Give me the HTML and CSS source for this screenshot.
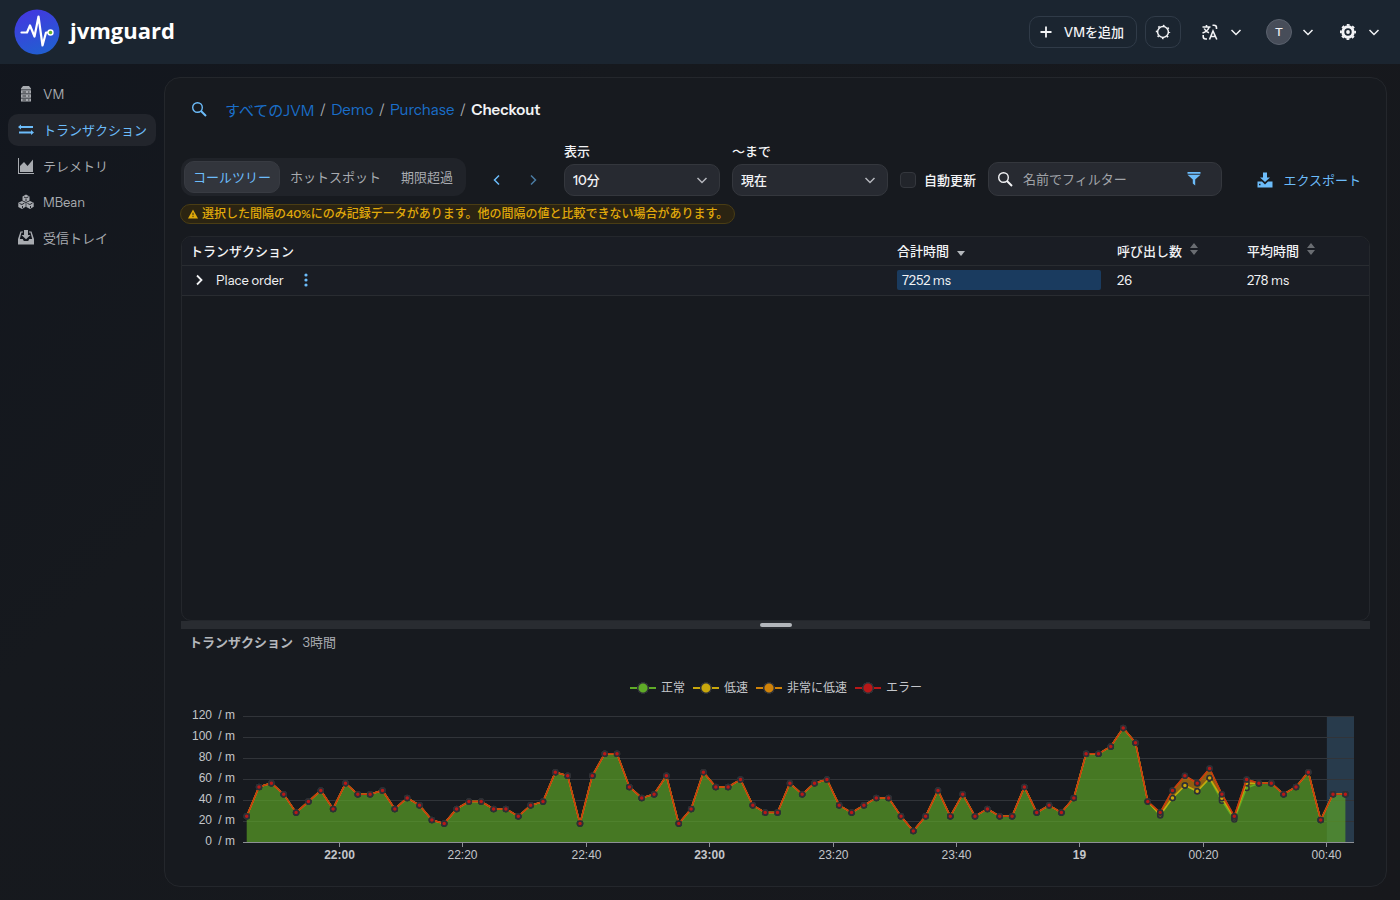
FILE: index.html
```html
<!DOCTYPE html>
<html lang="ja">
<head>
    <meta charset="UTF-8">
    <meta name="viewport" content="width=device-width, initial-scale=1.0">
    <title>jvmguard</title>
    <link rel="stylesheet" href="styles.css">
</head>
<body>
    <header class="navbar">
        <a class="brand" href="#">
            <svg class="logo" viewBox="0 0 46 46" aria-hidden="true">
                <defs>
                    <linearGradient id="logoFill" x1="0.3" y1="0" x2="0.7" y2="1">
                        <stop offset="0" stop-color="#4338e0"/>
                        <stop offset="1" stop-color="#2060d0"/>
                    </linearGradient>
                </defs>
                <circle cx="23" cy="23" r="22.5" fill="url(#logoFill)"/>
                <path d="M7.500 23.500h5.500l3-7 4.500 11 4-20 4 29 3.500-13h2" fill="none" stroke="#fff" stroke-width="2.200" stroke-linejoin="round" stroke-linecap="round"/>
                <circle cx="36.500" cy="23.500" r="2.500" fill="#62b52c" stroke="#fff" stroke-width="1.400"/>
            </svg>
            <span>jvmguard</span>
        </a>
        <div class="navbar-right">
            <button class="btn-outline add-vm">
                <svg class="icon" viewBox="0 0 16 16"><path d="M8 2.500v11M2.500 8h11" stroke="currentColor" stroke-width="1.800"/></svg>
                VMを追加
            </button>
            <button class="btn-outline square" aria-label="テーマ">
                <svg class="icon" viewBox="0 0 16 16" fill="none" stroke="currentColor">
                    <circle cx="8" cy="8" r="5.400" stroke-width="1.500"/>
                    <circle cx="8" cy="8" r="6.500" stroke-width="1.400" stroke-dasharray="1.700 3.405" stroke-dashoffset="0.850"/>
                </svg>
            </button>
            <button class="menu-button lang" aria-label="言語">
                <svg class="icon" viewBox="0 0 16 16" fill="none" stroke="currentColor" stroke-width="1.600">
                    <path d="M0.500 3h8M4.500 1v2M7 3.500c-1 2.500-3.500 4.500-6.500 5.500M2.200 4.500c1 2 2.800 3.500 4.800 4.300M7.500 15.500l3.500-8.500 3.800 8.500M8.800 12.500h4.800M10.500 1.200H12a2.500 2.500 0 0 1 2.500 2.500V5M1.200 11v1.500a2.500 2.500 0 0 0 2.500 2.500H5"/>
                </svg>
                <svg class="chevron" viewBox="0 0 12 12"><path d="M1.500 4l4.500 4.500 4.500-4.500"/></svg>
            </button>
            <button class="menu-button user" aria-label="ユーザー">
                <span class="avatar">T</span>
                <svg class="chevron" viewBox="0 0 12 12"><path d="M1.500 4l4.500 4.500 4.500-4.500"/></svg>
            </button>
            <button class="menu-button settings" aria-label="設定">
                <svg class="icon" viewBox="0 0 16 16" fill="none" stroke="currentColor">
                    <circle cx="8" cy="8" r="5.200" stroke-width="3"/>
                    <circle cx="8" cy="8" r="7.100" stroke-width="1.800" stroke-dasharray="2.800 2.776" stroke-dashoffset="1.400"/>
                    <circle cx="8" cy="8" r="1.900" fill="currentColor" stroke="none"/>
                </svg>
                <svg class="chevron" viewBox="0 0 12 12"><path d="M1.500 4l4.500 4.500 4.500-4.500"/></svg>
            </button>
        </div>
    </header>
    <div class="container">
        <nav class="sidebar">
            <a href="#">
                <svg class="icon" viewBox="0 0 16 16" fill="currentColor"><path d="M5 0h6l2 2.500v1H3v-1zM3 4.200h10v3.400H3zM3 8.300h10v3.400H3zM3 12.400h10V15.500H3z"/><path d="M4.500 6h3.500M10 6h1.500M4.500 10h3.500M10 10h1.500M4.500 14h3.500M10 14h1.500" stroke="#16191f" stroke-width="0.800"/></svg>
                VM
            </a>
            <a href="#" class="active">
                <svg class="icon" viewBox="0 0 16 16" fill="currentColor"><path d="M0 5l3-2.500V4h12v2H3v1.500zM16 10.500L13 8v1.500H1v2h12V13z"/></svg>
                トランザクション
            </a>
            <a href="#">
                <svg class="icon" viewBox="0 0 16 16" fill="currentColor"><path d="M0 0h1v15h15v1H0zM2 14V8l4-4 3.500 4L15 1.500V14z"/></svg>
                テレメトリ
            </a>
            <a href="#">
                <svg class="icon" viewBox="0 0 16 16" fill="currentColor"><path d="M8 0.500l3.500 2v4L8 8 4.500 6.500v-4zM4 7l3.700 1.800v4L4 15 0.300 13V8.800zM12 7l3.700 1.800v4L12 15l-3.700-2V8.800z"/><path d="M6 3l2 1 2.500-1.200M8 5v2M1.500 9.500L4 10.500l2.500-1.500M9.500 9.500l2.500 1 2.500-1.500M4.500 12v2M12.500 12v2" fill="none" stroke="#16191f" stroke-width="0.900"/></svg>
                MBean
            </a>
            <a href="#">
                <svg class="icon" viewBox="0 0 16 16" fill="currentColor"><path d="M6 0h4v5h2.500L8 9.200 3.500 5H6zM2.500 1.500H5v1H3.500L1.800 9h3l1 2h4.400l1-2h3l-1.700-6.500H11v-1h2.500L16 9v5.500H0V9z"/></svg>
                受信トレイ
            </a>
        </nav>
        <main class="panel">
            <div class="breadcrumb">
                <button class="search-button" aria-label="検索">
                    <svg class="icon" viewBox="0 0 16 16" fill="none" stroke="currentColor"><circle cx="6.500" cy="6.500" r="4.800" stroke-width="1.400"/><path d="M10 10l5 5" stroke-width="2"/></svg>
                </button>
                <a href="#">すべてのJVM</a><span>/</span><a href="#">Demo</a><span>/</span><a href="#">Purchase</a><span>/</span><strong>Checkout</strong>
            </div>

            <div class="toolbar">
                <div class="tabs">
                    <button class="active">コールツリー</button>
                    <button>ホットスポット</button>
                    <button>期限超過</button>
                </div>
                <div class="pager">
                    <button aria-label="前へ"><svg viewBox="0 0 12 12"><path d="M8 1.500L3.500 6 8 10.500"/></svg></button>
                    <button aria-label="次へ" disabled><svg viewBox="0 0 12 12"><path d="M4 1.500L8.500 6 4 10.500"/></svg></button>
                </div>
                <div class="field">
                    <label for="interval">表示</label>
                    <select id="interval"><option>10分</option></select>
                </div>
                <div class="field">
                    <label for="until">～まで</label>
                    <select id="until"><option>現在</option></select>
                </div>
                <label class="auto-update"><input type="checkbox">自動更新</label>
                <div class="filter">
                    <svg class="icon" viewBox="0 0 16 16" fill="none" stroke="currentColor"><circle cx="6.500" cy="6.500" r="4.800" stroke-width="1.400"/><path d="M10 10l5 5" stroke-width="2"/></svg>
                    <input type="text" placeholder="名前でフィルター" aria-label="名前でフィルター">
                    <button aria-label="フィルター"><svg class="icon" viewBox="0 0 16 16" fill="currentColor"><path d="M1.500 1h13v1.800h-13zM1.500 3.800h13L9.200 8.500v6L6.800 12.500v-4z"/></svg></button>
                </div>
                <button class="export">
                    <svg class="icon" viewBox="0 0 16 16" fill="currentColor"><path d="M6 0.500h4v5h3L8 10 3 5.500h3zM0.500 9.500H5l3 3 3-3h4.500v6H0.500z"/><path d="M2 12.500h1.500" stroke="#171a1f" stroke-width="1.500"/></svg>
                    エクスポート
                </button>
            </div>

            <div class="notice">
                <svg viewBox="0 0 12 12"><path d="M6 0.500L12 11.500H0z" fill="currentColor"/><path d="M6 4.500v3M6 8.500v1.200" stroke="#2b2412" stroke-width="1.200"/></svg>
                選択した間隔の40%にのみ記録データがあります。他の間隔の値と比較できない場合があります。
            </div>

            <div class="table-box">
                <table>
                    <colgroup><col><col class="col-total"><col class="col-count"><col class="col-avg"></colgroup>
                    <thead>
                        <tr>
                            <th>トランザクション</th>
                            <th>合計時間<svg class="sort sorted" viewBox="0 0 8 14"><path d="M0 5h8l-4 5z"/></svg></th>
                            <th>呼び出し数<svg class="sort" viewBox="0 0 8 14"><path d="M0 6h8L4 1zM0 8h8l-4 5z"/></svg></th>
                            <th>平均時間<svg class="sort" viewBox="0 0 8 14"><path d="M0 6h8L4 1zM0 8h8l-4 5z"/></svg></th>
                        </tr>
                    </thead>
                    <tbody>
                        <tr>
                            <td>
                                <div class="tree-cell">
                                    <button class="expand" aria-label="展開"><svg viewBox="0 0 12 12"><path d="M4 1.500L8.500 6 4 10.500"/></svg></button>
                                    Place order
                                    <button class="more" aria-label="メニュー"><svg viewBox="0 0 4 14" fill="currentColor"><circle cx="2" cy="2" r="1.600"/><circle cx="2" cy="7" r="1.600"/><circle cx="2" cy="12" r="1.600"/></svg></button>
                                </div>
                            </td>
                            <td><div class="time-bar">7252 ms</div></td>
                            <td>26</td>
                            <td>278 ms</td>
                        </tr>
                    </tbody>
                </table>
            </div>
            <div class="splitter"><span></span></div>

            <section class="chart-section">
                <h2>トランザクション <span>3時間</span></h2>
                <ul class="legend">
                    <li class="normal"><i></i>正常</li>
                    <li class="slow"><i></i>低速</li>
                    <li class="very-slow"><i></i>非常に低速</li>
                    <li class="error"><i></i>エラー</li>
                </ul>
                <svg id="chart" class="chart"></svg>
            </section>
        </main>
    </div>

    <script>
        // one count = 3.5 transactions per minute, one sample every two minutes
        const UNIT = 3.5;
        const total = [
            7, 15, 16, 13, 8, 11, 14, 9, 16, 13, 13, 14, 9, 12, 10, 6, 5, 9, 11, 11,
            9, 9, 7, 10, 11, 19, 18, 5, 18, 24, 24, 15, 12, 13, 18, 5, 9, 19, 15, 15,
            17, 10, 8, 8, 16, 13, 16, 17, 10, 8, 10, 12, 12, 7, 3, 7, 14, 7, 13, 7,
            9, 7, 7, 15, 8, 10, 8, 12, 24, 24, 26, 31, 27, 11, 8, 14, 18, 16, 20, 13,
            7, 17, 16, 16, 13, 15, 19, 6, 13, 13
        ];
        // samples where slow transactions were recorded: index -> level
        const slowTop = { 74: 7.4, 75: 12, 76: 15.4, 77: 13.8, 78: 17.4, 79: 11.9, 80: 6.6, 81: 16 };
        const normalTop = { 74: 7.2, 75: 12, 76: 15.4, 77: 13.8, 78: 17.2, 79: 11.2, 80: 6.1, 81: 14.7 };

        const ticks = [
            [15, '22:00', true], [35, '22:20'], [55, '22:40'], [75, '23:00', true],
            [95, '23:20'], [115, '23:40'], [135, '19', true], [155, '00:20'], [175, '00:40']
        ];

        function drawChart() {
            const svg = document.getElementById('chart');
            const width = svg.clientWidth;
            const left = 62, right = width - 16, top = 12, bottom = 138;
            const x = min => left + (min + 0.6) * (right - left) / 180;
            const y = v => bottom - v * (bottom - top) / 120;
            let out = '';

            out += `<rect class="selection" x="${x(175)}" y="${top}" width="${right - x(175)}" height="${bottom - top}"/>`;
            for (let v = 0; v <= 120; v += 20) {
                const gy = Math.round(y(v)) + 0.5;
                out += `<line class="${v ? 'grid' : 'axis'}" x1="${left}" x2="${right}" y1="${gy}" y2="${gy}"/>`;
                out += `<text class="y-label" x="${left - 31}" y="${gy + 2.5}">${v}</text>`;
                out += `<text class="y-label" x="${left - 8}" y="${gy + 2.5}">/ m</text>`;
            }

            const points = data => data.map((n, i) => [x(i * 2), y(n * UNIT)]);
            const join = pts => pts.map(p => p.map(c => c.toFixed(1)).join(',')).join(' ');
            const layers = [
                ['normal', points(total.map((n, i) => normalTop[i] || n))],
                ['slow', points(total.map((n, i) => slowTop[i] || n))],
                ['very-slow', points(total)],
                ['error', points(total)]
            ];
            let below = [[x(178), bottom], [x(0), bottom]];
            for (const [name, pts] of layers) {
                if (name !== 'error') {
                    out += `<polygon class="area ${name}" points="${join(pts)} ${join(below)}"/>`;
                }
                below = [...pts].reverse();
            }
            for (const [name, pts] of layers) {
                out += `<polyline class="line ${name}" points="${join(pts)}"/>`;
                for (const p of pts) {
                    out += `<circle class="dot ${name}" cx="${p[0].toFixed(1)}" cy="${p[1].toFixed(1)}" r="2.5"/>`;
                }
            }

            for (const [min, text, bold] of ticks) {
                const tx = Math.floor(x(min)) + 0.5;
                out += `<line class="axis" x1="${tx}" x2="${tx}" y1="${bottom}" y2="${bottom + 5}"/>`;
                out += `<text class="x-label${bold ? ' bold' : ''}" x="${tx}" y="${bottom + 17}">${text}</text>`;
            }
            svg.innerHTML = out;
        }

        drawChart();
        window.addEventListener('resize', drawChart);
    </script>
</body>
</html>
```
FILE: styles.css
```css
* {
    box-sizing: border-box;
}
body {
    margin: 0;
    min-height: 100vh;
    display: flex;
    flex-direction: column;
    font-family: "Instrument Sans", Inter, "Noto Sans CJK JP", sans-serif;
    font-size: 13px;
    color: #f2f3f5;
    background: linear-gradient(135deg, #12161e, #16191e 30%, #17181c);
}
button, input, select {
    font: inherit;
    color: inherit;
}
button {
    background: none;
    border: 0;
    padding: 0;
    display: flex;
    align-items: center;
    justify-content: center;
}
a {
    text-decoration: none;
}
svg {
    flex: none;
}
.icon {
    width: 16px;
    height: 16px;
}

/* header */
.navbar {
    height: 64px;
    padding: 0 20px 0 14px;
    display: flex;
    justify-content: space-between;
    align-items: center;
    background-color: #1b2530;
}
.brand {
    display: flex;
    align-items: center;
    gap: 10px;
    color: #fff;
    font: bold 22px "Open Sans", "Noto Sans", sans-serif;
}
.brand span {
    margin-bottom: 4px;
}
.logo {
    width: 46px;
    height: 46px;
}
.navbar-right {
    display: flex;
    align-items: center;
}
.btn-outline {
    height: 32px;
    border: 1px solid #303b48;
    border-radius: 10px;
    font-weight: 500;
    line-height: 18px;
}
.add-vm {
    gap: 10px;
    padding: 0 12px 0 8px;
    margin-right: 8px;
}
.square {
    width: 36px;
}
.menu-button {
    gap: 12px;
}
.lang {
    margin-left: 21px;
}
.user {
    gap: 10px;
    margin-left: 24px;
}
.settings {
    margin-left: 26px;
}
.avatar {
    width: 26px;
    height: 26px;
    border: 1px solid #5b626e;
    border-radius: 50%;
    background-color: #474d59;
    font-size: 12px;
    font-weight: 500;
    line-height: 24px;
    text-align: center;
}
.chevron, .pager svg, .expand svg {
    width: 12px;
    height: 12px;
    fill: none;
    stroke: currentColor;
    stroke-width: 1.500;
}
.expand svg {
    stroke-width: 1.800;
}

/* sidebar */
.container {
    flex: 1;
    display: flex;
}
.sidebar {
    width: 164px;
    flex: none;
    padding: 14px 8px;
    display: flex;
    flex-direction: column;
    gap: 4px;
}
.sidebar a {
    height: 32px;
    padding: 0 10px 1px;
    display: flex;
    align-items: center;
    gap: 9px;
    border-radius: 10px;
    color: #a8abb0;
    white-space: nowrap;
}
.sidebar a.active {
    color: #6cbcfa;
    background-color: #22252c;
}

/* main panel */
.panel {
    flex: 1;
    min-width: 0;
    margin: 13px 13px 13px 0;
    padding: 16px;
    display: flex;
    flex-direction: column;
    border: 1px solid #24272c;
    border-radius: 16px;
    background-color: #171a1f;
}
.breadcrumb {
    height: 30px;
    display: flex;
    align-items: center;
    gap: 5px;
    font-size: 15px;
}
.breadcrumb a {
    color: #1a6fca;
}
.breadcrumb span {
    color: #a8abb0;
}
.breadcrumb strong {
    font-weight: 600;
}
.search-button {
    width: 36px;
    height: 32px;
    margin-right: 3px;
    color: #6cbcfa;
}
.toolbar {
    margin-top: 18px;
    display: flex;
    align-items: flex-end;
}
.tabs {
    height: 38px;
    padding: 3px;
    display: flex;
    border-radius: 12px;
    background-color: #202329;
}
.tabs button {
    height: 32px;
    padding: 0 10px 1px;
    border-radius: 10px;
    color: #a8abb0;
}
.tabs .active {
    color: #6cbcfa;
    background-color: #32353c;
    border: 1px solid #383b42;
    padding: 0 8px 1px;
}
.pager {
    margin-left: 13px;
    display: flex;
    color: #6cbcfa;
}
.pager button {
    width: 36px;
    height: 32px;
}
.pager button:disabled {
    opacity: 0.6;
}
.field {
    width: 156px;
    margin-left: 12px;
}
.pager + .field {
    margin-left: 13px;
}
.field label {
    display: block;
    margin-bottom: 3px;
    line-height: 19px;
    font-weight: 500;
}
.field select {
    display: block;
    width: 100%;
    height: 32px;
    padding: 0 8px;
    border: 1px solid #34373d;
    border-radius: 10px;
    font-weight: 500;
    appearance: none;
    background: #272a31 url("data:image/svg+xml,%3Csvg xmlns='http://www.w3.org/2000/svg' viewBox='0 0 12 12'%3E%3Cpath d='M1.500 4l4.500 4.500 4.500-4.500' fill='none' stroke='%23b4b7bc' stroke-width='1.500'/%3E%3C/svg%3E") no-repeat right 11px center / 12px;
}
.auto-update {
    height: 32px;
    margin-left: 12px;
    display: flex;
    align-items: center;
    gap: 8px;
    font-weight: 500;
    line-height: 18px;
}
.auto-update input {
    appearance: none;
    width: 16px;
    height: 16px;
    margin: 0;
    border: 1px solid #34373d;
    border-radius: 4px;
    background-color: #22252b;
}
.filter {
    width: 234px;
    height: 34px;
    margin-left: 12px;
    padding: 0 19px 0 8px;
    display: flex;
    align-items: center;
    gap: 10px;
    border: 1px solid #34373d;
    border-radius: 10px;
    background-color: #272a31;
}
.filter input {
    flex: 1;
    min-width: 0;
    padding: 0;
    border: 0;
    background: none;
}
.filter input::placeholder {
    color: #a0a3a8;
}
.filter button, .export {
    color: #6cbcfa;
}
.export {
    height: 32px;
    gap: 10px;
    margin-left: auto;
    padding-right: 9px;
    line-height: 18px;
}
.notice {
    height: 20px;
    margin-top: 8px;
    margin-left: -1px;
    padding: 0 6px 0 7px;
    align-self: flex-start;
    display: flex;
    align-items: center;
    gap: 4px;
    border: 1px solid #4a3d14;
    border-radius: 10px;
    background-color: #2b2412;
    color: #e0a90a;
    font-size: 12px;
    line-height: 16px;
    font-weight: 500;
}
.notice svg {
    width: 10px;
    height: 10px;
}

/* call tree table */
.table-box {
    flex: 1;
    min-height: 120px;
    margin-top: 12px;
    border: 1px solid #24272c;
    border-radius: 10px;
    overflow: hidden;
}
table {
    width: 100%;
    border-collapse: collapse;
    table-layout: fixed;
    background-color: #1a1d24;
}
.col-total {
    width: 220px;
}
.col-count, .col-avg {
    width: 130px;
}
th, td {
    height: 30px;
    padding: 0 8px;
    border-bottom: 1px solid #292c31;
    text-align: left;
    line-height: 20px;
}
th {
    height: 28px;
    font-weight: 500;
}
.sort {
    width: 8px;
    height: 14px;
    margin-left: 8px;
    fill: #6a6d72;
}
.sort.sorted {
    fill: #b4b7bc;
    vertical-align: -4px;
}
.tree-cell {
    display: flex;
    align-items: center;
}
.expand {
    width: 18px;
    height: 20px;
    margin-right: 8px;
}
.more {
    width: 4px;
    margin-left: 20px;
    color: #6cbcfa;
}
.time-bar {
    height: 20px;
    padding: 0 5px;
    border-radius: 2px;
    background-color: #1a3b5f;
}
.splitter {
    height: 8px;
    display: flex;
    align-items: center;
    justify-content: center;
    background-color: #292c31;
}
.splitter span {
    width: 32px;
    height: 4px;
    border-radius: 2px;
    background-color: #b4b7bc;
}

/* chart */
.chart-section h2 {
    margin: 3px 8px;
    font-size: 13px;
    line-height: 20px;
    font-weight: bold;
    color: #b4b7bc;
}
.chart-section h2 span {
    margin-left: 7px;
    font-weight: normal;
    color: #a8abb0;
}
.legend {
    margin: 26px 0 0;
    padding: 0 0 0 1px;
    display: flex;
    justify-content: center;
    gap: 8px;
    list-style: none;
    font: 12px/20px "Liberation Sans", "Noto Sans CJK JP", sans-serif;
    color: #c4c6ca;
}
.legend li {
    display: flex;
    align-items: center;
    gap: 5px;
}
.legend i {
    width: 26px;
    height: 14px;
    background: radial-gradient(circle, var(--series) 4px, #2d3035 5px, #2d3035 6px, transparent 6px), linear-gradient(var(--series), var(--series)) center / 100% 2px no-repeat;
}
.normal {
    --series: #5fab27;
}
.slow {
    --series: #c8a70c;
}
.very-slow {
    --series: #d08309;
}
.error {
    --series: #b81818;
}
.chart {
    display: block;
    width: 100%;
    height: 166px;
    margin-top: 6px;
    font: 12px "Liberation Sans", sans-serif;
}
.chart text {
    fill: #c4c6ca;
}
.y-label {
    text-anchor: end;
}
.x-label {
    text-anchor: middle;
}
.bold {
    font-weight: bold;
}
.grid {
    stroke: #313439;
}
.axis {
    stroke: #8d9095;
}
.area {
    fill: var(--series);
    fill-opacity: 0.65;
}
.line {
    fill: none;
    stroke: var(--series);
    stroke-width: 1.500;
}
.line.error {
    stroke: #c82a10;
    stroke-opacity: 0.85;
}
.dot {
    fill: var(--series);
    stroke: #2d3035;
    stroke-width: 1.500;
}
.selection {
    fill: #5a9fd4;
    fill-opacity: 0.25;
}
```
